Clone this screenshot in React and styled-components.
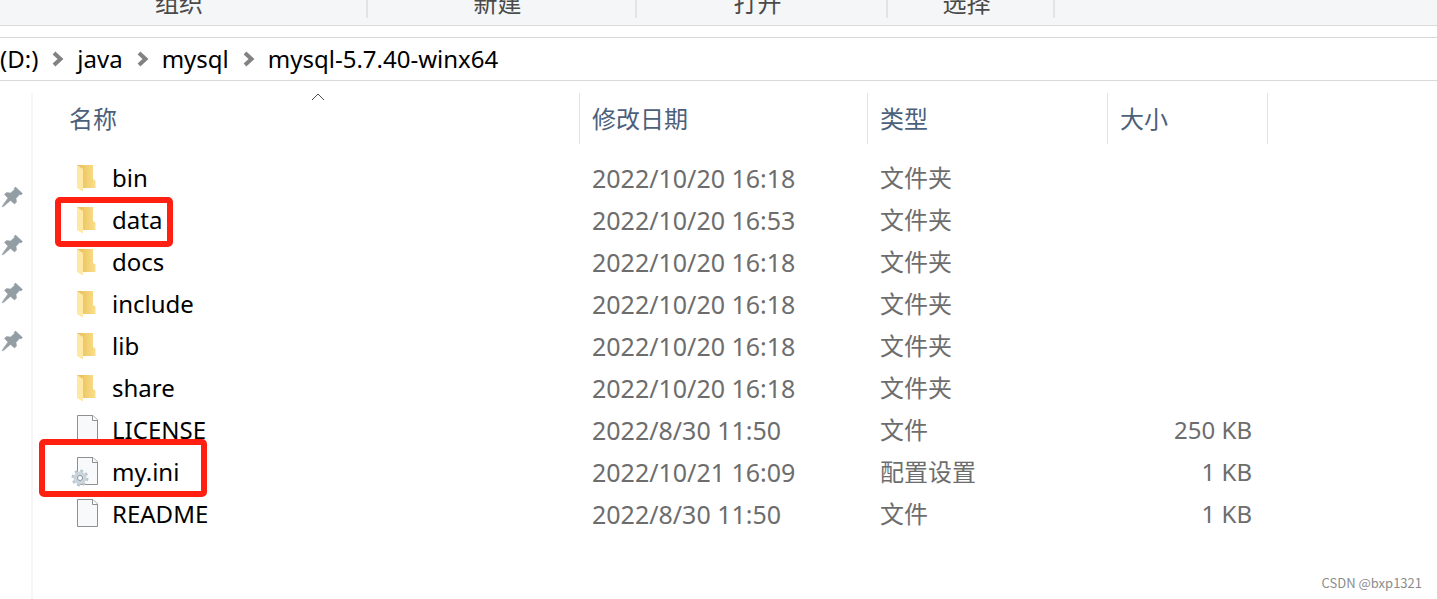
import styled, { createGlobalStyle } from "styled-components";

const GlobalStyle = createGlobalStyle`
  * {
    box-sizing: border-box;
  }

  body {
    margin: 0;
    background: #ffffff;
    color: #000000;
    font-family: "Noto Sans", "Noto Sans CJK SC", sans-serif;
    font-size: 24px;
    line-height: 30px;
    overflow: hidden;
  }
`;

/* Page */

const Explorer = styled.div`
  min-height: 100vh;
  display: flex;
  flex-direction: column;
`;

/* Ribbon, only its bottom edge with the group names is in view */

const Ribbon = styled.div`
  height: 26px;
  display: flex;
  align-items: flex-start;
  background: #f5f6f8;
  border-bottom: 1px solid #d9dadc;
`;

const RibbonGroup = styled.div`
  flex: 0 0 ${({ $width }) => $width}px;
  height: 18px;
  padding-right: 8px;
  display: flex;
  justify-content: center;
  align-items: flex-end;
  border-right: 2px solid #e2e3e5;
  color: #4a4a4a;
`;

/* Address bar */

const AddressBar = styled.nav`
  margin-top: 11px;
  height: 44px;
  display: flex;
  align-items: center;
  border-top: 1px solid #d9d9d9;
  border-bottom: 1px solid #d9d9d9;
`;

const Crumb = styled.a`
  color: #000000;
  text-decoration: none;
`;

const CrumbArrow = styled.svg`
  flex: none;
  width: 12px;
  height: 16px;
  margin: 0 13px 0 14px;
`;

/* Body: quick access pins and the file list */

const Body = styled.div`
  flex: 1;
  display: flex;
  padding-top: 12px;
`;

const Sidebar = styled.aside`
  flex: 0 0 33px;
  border-right: 2px solid #f5f5f5;
`;

const PinList = styled.ul`
  margin: 0;
  padding: 80px 0 0;
  list-style: none;
`;

const PinItem = styled.li`
  height: 48px;
  display: flex;
  align-items: center;
`;

const Content = styled.main`
  flex: 1;
  display: flex;
  flex-direction: column;
  padding-left: 24px;
`;

const FileTable = styled.table`
  width: 1211px;
  table-layout: fixed;
  border-collapse: separate;
  border-spacing: 0;

  tbody::before {
    content: "";
    display: block;
    height: 13px;
  }
`;

const HeadCell = styled.th`
  position: relative;
  width: ${({ $width }) => $width}px;
  height: 51px;
  padding: 0 12px;
  border-right: 1px solid #e2e2e2;
  color: #4c607a;
  font-weight: 400;
  text-align: left;
`;

const SortArrow = styled.svg`
  position: absolute;
  top: 0;
  left: 50%;
  width: 14px;
  height: 8px;
  margin-left: -7px;
`;

const Cell = styled.td`
  position: relative;
  height: 42px;
  padding: 0 ${({ $align }) => ($align === "right" ? 16 : 12)}px 0 12px;
  color: #6d6d6d;
  text-align: ${({ $align }) => $align || "left"};
  white-space: nowrap;
`;

const DateCell = styled(Cell)`
  font-size: 25px;
`;

const FileName = styled.div`
  display: flex;
  align-items: center;
  gap: 11px;
  color: #000000;
`;

const FileIcon = styled.svg`
  flex: none;
  width: 32px;
  height: 32px;
`;

/* Red frame drawn over a file */

const Mark = styled.span`
  position: absolute;
  z-index: 1;
  top: ${({ $top }) => $top}px;
  left: ${({ $left }) => $left}px;
  width: ${({ $width }) => $width}px;
  height: ${({ $height }) => $height}px;
  border: 6px solid #ff2012;
  border-radius: 5px;
  pointer-events: none;
`;

const Watermark = styled.footer`
  margin-top: auto;
  padding: 0 15px 8px;
  color: #8c8c8c;
  font-family: "Noto Sans CJK SC", sans-serif;
  font-size: 13px;
  line-height: 16px;
  text-align: right;
`;

const groups = [
  { name: "组织", width: 368 },
  { name: "新建", width: 269 },
  { name: "打开", width: 251 },
  { name: "选择", width: 167 },
];

const crumbs = ["(D:)", "java", "mysql", "mysql-5.7.40-winx64"];

const pins = [1, 2, 3, 4];

const columns = [
  { name: "名称", width: 523, sorted: true },
  { name: "修改日期", width: 288 },
  { name: "类型", width: 240 },
  { name: "大小", width: 160 },
];

const files = [
  { name: "bin", icon: "folder", date: "2022/10/20 16:18", type: "文件夹" },
  {
    name: "data",
    icon: "folder",
    date: "2022/10/20 16:53",
    type: "文件夹",
    mark: { top: -2, left: -2, width: 118, height: 50 },
  },
  { name: "docs", icon: "folder", date: "2022/10/20 16:18", type: "文件夹" },
  { name: "include", icon: "folder", date: "2022/10/20 16:18", type: "文件夹" },
  { name: "lib", icon: "folder", date: "2022/10/20 16:18", type: "文件夹" },
  { name: "share", icon: "folder", date: "2022/10/20 16:18", type: "文件夹" },
  { name: "LICENSE", icon: "file", date: "2022/8/30 11:50", type: "文件", size: "250 KB" },
  {
    name: "my.ini",
    icon: "config",
    date: "2022/10/21 16:09",
    type: "配置设置",
    size: "1 KB",
    mark: { top: -12, left: -18, width: 168, height: 58 },
  },
  { name: "README", icon: "file", date: "2022/8/30 11:50", type: "文件", size: "1 KB" },
];

function PinIcon() {
  return (
    <svg width="24" height="24" viewBox="0 0 24 24" aria-hidden="true">
      <path
        d="M15.5 2 22.5 8.500 21 10 19.500 9.500 16 13.500 16.500 17 14.500 19 10.500 15.500 4 21 2 22 3 20 8 13 4.500 9.500 6.500 7.500 10.500 8 14.500 4.500 14 3.500Z"
        fill="#929da4"
        stroke="#929da4"
        strokeWidth="0.500"
      />
    </svg>
  );
}

function Icon({ kind }) {
  if (kind === "folder") {
    return (
      <FileIcon viewBox="0 0 32 32" aria-hidden="true">
        <defs>
          <linearGradient id="folderBack" x1="0" x2="1">
            <stop offset="0.200" stopColor="#eac35f" />
            <stop offset="1" stopColor="#fbdf8b" />
          </linearGradient>
        </defs>
        <path d="M8 3H24V17L26.500 18.500V26H8Z" fill="url(#folderBack)" />
        <path d="M8 3 14 7V29.500L8 26Z" fill="#ffe8a3" />
      </FileIcon>
    );
  }

  return (
    <FileIcon viewBox="0 0 32 32" aria-hidden="true">
      <path d="M8.500 1.500H24L28.500 6V28.500H8.500Z" fill="#f8f9fa" stroke="#8f8f8f" />
      <path d="M23.500 1.500V6.500H28.500" fill="#ffffff" stroke="#8f8f8f" />
      {kind === "config" && (
        <>
          <circle cx="11" cy="22" r="7" fill="none" stroke="#b9c6cf" strokeWidth="3" strokeDasharray="2.750 2.750" />
          <circle cx="11" cy="22" r="4.500" fill="#ffffff" stroke="#c9d4db" strokeWidth="4" />
          <circle cx="11" cy="22" r="2.500" fill="#ffffff" stroke="#87929a" />
        </>
      )}
    </FileIcon>
  );
}

function FileRow({ file }) {
  return (
    <tr>
      <Cell>
        <FileName>
          <Icon kind={file.icon} />
          {file.name}
        </FileName>
        {file.mark && (
          <Mark
            $top={file.mark.top}
            $left={file.mark.left}
            $width={file.mark.width}
            $height={file.mark.height}
          />
        )}
      </Cell>
      <DateCell>{file.date}</DateCell>
      <Cell>{file.type}</Cell>
      <Cell $align="right">{file.size}</Cell>
    </tr>
  );
}

function App() {
  return (
    <Explorer>
      <GlobalStyle />
      <Ribbon>
        {groups.map((group) => (
          <RibbonGroup key={group.name} $width={group.width}>
            {group.name}
          </RibbonGroup>
        ))}
      </Ribbon>
      <AddressBar>
        {crumbs.map((crumb, index) => [
          index > 0 && (
            <CrumbArrow key={crumb + "-arrow"} viewBox="0 0 12 16" aria-hidden="true">
              <path d="M2 2 8.500 8 2 14" fill="none" stroke="#828282" strokeWidth="4" />
            </CrumbArrow>
          ),
          <Crumb key={crumb} href="#">
            {crumb}
          </Crumb>,
        ])}
      </AddressBar>
      <Body>
        <Sidebar>
          <PinList>
            {pins.map((pin) => (
              <PinItem key={pin}>
                <PinIcon />
              </PinItem>
            ))}
          </PinList>
        </Sidebar>
        <Content>
          <FileTable>
            <thead>
              <tr>
                {columns.map((column) => (
                  <HeadCell key={column.name} $width={column.width}>
                    {column.name}
                    {column.sorted && (
                      <SortArrow viewBox="0 0 14 8" aria-hidden="true">
                        <path d="M1 7 7 1 13 7" fill="none" stroke="#4a4a4a" />
                      </SortArrow>
                    )}
                  </HeadCell>
                ))}
              </tr>
            </thead>
            <tbody>
              {files.map((file) => (
                <FileRow key={file.name} file={file} />
              ))}
            </tbody>
          </FileTable>
          <Watermark>CSDN @bxp1321</Watermark>
        </Content>
      </Body>
    </Explorer>
  );
}

export default App;
